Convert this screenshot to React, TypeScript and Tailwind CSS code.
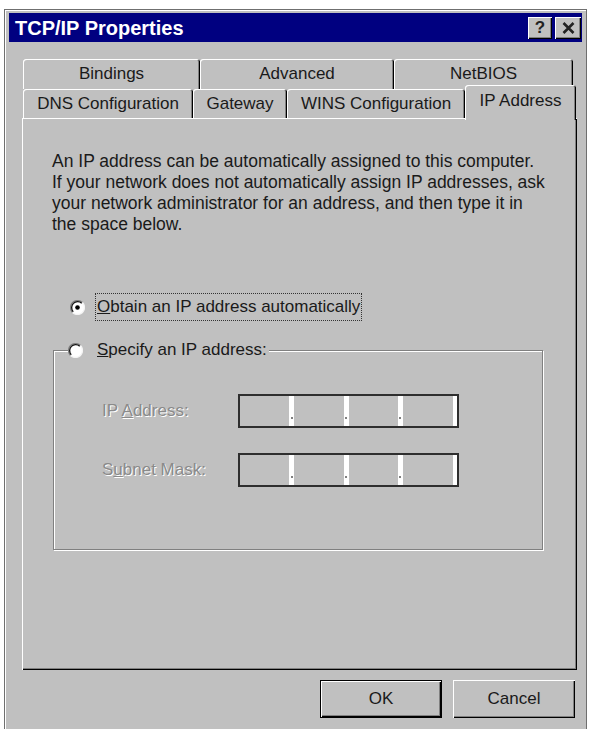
import React from "react";

const RAISED = "shadow-[inset_1px_1px_0_#fff,inset_-1px_-1px_0_#000,inset_-2px_-2px_0_#808080]";
const TAB = "flex items-center justify-center rounded-t-[3px] shadow-[inset_1px_1px_0_#fff,inset_-1px_0_0_#000,inset_-2px_0_0_#808080]";

function Radio({ checked }: { checked?: boolean }) {
  return (
    <svg width="15" height="15" viewBox="0 0 15 15" className="shrink-0">
      <circle cx="7.5" cy="7.5" r="7" fill="#fff" />
      <path d="M2.55 12.45 A7 7 0 0 1 12.45 2.55" fill="none" stroke="#808080" strokeWidth="1.3" />
      <path d="M3.26 11.74 A6 6 0 0 1 11.74 3.26" fill="none" stroke="#111" strokeWidth="1.3" />
      <path d="M12.45 2.55 A7 7 0 0 1 2.55 12.45" fill="none" stroke="#f4f4f4" strokeWidth="1.3" />
      {checked && <circle cx="7.5" cy="7.5" r="2.3" fill="#000" />}
    </svg>
  );
}

function IpField() {
  return (
    <div className="flex w-[221px] h-[34px] border-2 border-[#2e2e2e] bg-[#c0c0c0]">
      {[0, 1, 2, 3].map(i => (
        <div key={i} className="flex flex-1">
          <div className="flex-1" />
          <div className={`flex flex-col items-center justify-end pb-[7px] bg-white ${i === 3 ? "w-[4px]" : "w-[5px]"}`}>
            {i < 3 && <div className="w-[2px] h-[2px] bg-[#808080]" />}
          </div>
        </div>
      ))}
    </div>
  );
}

function Disabled({ children }: { children: React.ReactNode }) {
  return <span className="text-[#8a8a8a] [text-shadow:1px_1px_0_#fff]">{children}</span>;
}

export default function App() {
  return (
    <div className="w-[590px] h-[729px] bg-white overflow-hidden font-['Liberation_Sans',Arial,sans-serif] text-[#1a1a1a]">
      <div className="ml-[4px] mt-[9px] w-[583px] h-[725px] bg-[#c0c0c0] border border-[#6f6f6f] shadow-[inset_1px_1px_0_#fff] pt-[3px] px-[4px] flex flex-col">
        {/* title bar */}
        <div className="h-[29px] bg-[#000080] flex items-center pl-[6px] pr-[1px]">
          <span className="text-white font-bold text-[20px] leading-none">TCP/IP Properties</span>
          <div className="ml-auto flex gap-[3px]">
            <div className={`w-[24px] h-[22px] bg-[#c0c0c0] flex items-center justify-center text-[17px] font-bold text-[#222] ${RAISED}`}>?</div>
            <div className={`w-[26px] h-[22px] bg-[#c0c0c0] flex items-center justify-center ${RAISED}`}>
              <svg width="13" height="12" viewBox="0 0 13 12">
                <path d="M1.5 1 L11.5 11 M11.5 1 L1.5 11" stroke="#222" strokeWidth="2.6" />
              </svg>
            </div>
          </div>
        </div>

        {/* tabs */}
        <div className="mt-[17px] ml-[14px] text-[17px]">
          <div className="flex h-[30px]">
            <div className={`${TAB} w-[177px]`}>Bindings</div>
            <div className={`${TAB} w-[194px]`}>Advanced</div>
            <div className={`${TAB} w-[179px]`}>NetBIOS</div>
          </div>
          <div className="flex h-[29px] items-end">
            <div className={`${TAB} w-[170px] h-[29px]`}>DNS Configuration</div>
            <div className={`${TAB} w-[94px] h-[29px]`}>Gateway</div>
            <div className={`${TAB} w-[178px] h-[29px]`}>WINS Configuration</div>
            <div className={`${TAB} w-[111px] h-[35px] -mb-[2px] pb-[4px] relative z-10 bg-[#c0c0c0]`}>IP Address</div>
          </div>
        </div>

        {/* panel */}
        <div className={`ml-[13px] w-[555px] h-[552px] pt-[33px] pl-[30px] ${RAISED}`}>
          <p className="text-[17.5px] leading-[21px] whitespace-nowrap">
            An IP address can be automatically assigned to this computer.<br />
            If your network does not automatically assign IP addresses, ask<br />
            your network administrator for an address, and then type it in<br />
            the space below.
          </p>

          <div className="mt-[58px] ml-[18px] flex items-center gap-[10px] text-[17px]">
            <Radio checked />
            <span className="border border-dotted border-[#333] px-[1px] py-[4px] leading-[18px]">
              <span className="underline">O</span>btain an IP address automatically
            </span>
          </div>

          <fieldset className="mt-[19px] ml-[1px] w-[490px] h-[210px] border border-[#808080] shadow-[inset_1px_1px_0_#fff,1px_1px_0_#fff] text-[17px]">
            <legend className="ml-[14px] pr-[2px] bg-[#c0c0c0]">
              <span className="flex items-center gap-[14px] leading-[20px]">
                <Radio />
                <span><span className="underline">S</span>pecify an IP address:</span>
              </span>
            </legend>
            <div className="pl-[48px] pt-[34px]">
              <div className="flex items-center">
                <div className="w-[136px]"><Disabled>IP <span className="underline">A</span>ddress:</Disabled></div>
                <IpField />
              </div>
              <div className="flex items-center mt-[25px]">
                <div className="w-[136px]"><Disabled>S<span className="underline">u</span>bnet Mask:</Disabled></div>
                <IpField />
              </div>
            </div>
          </fieldset>
        </div>

        {/* buttons */}
        <div className="mt-[10px] mr-[7px] flex justify-end gap-[11px] text-[17px]">
          <button className={`w-[122px] h-[38px] border border-black bg-[#c0c0c0] ${RAISED}`}>OK</button>
          <button className={`w-[122px] h-[38px] bg-[#c0c0c0] ${RAISED}`}>Cancel</button>
        </div>
      </div>
    </div>
  );
}
